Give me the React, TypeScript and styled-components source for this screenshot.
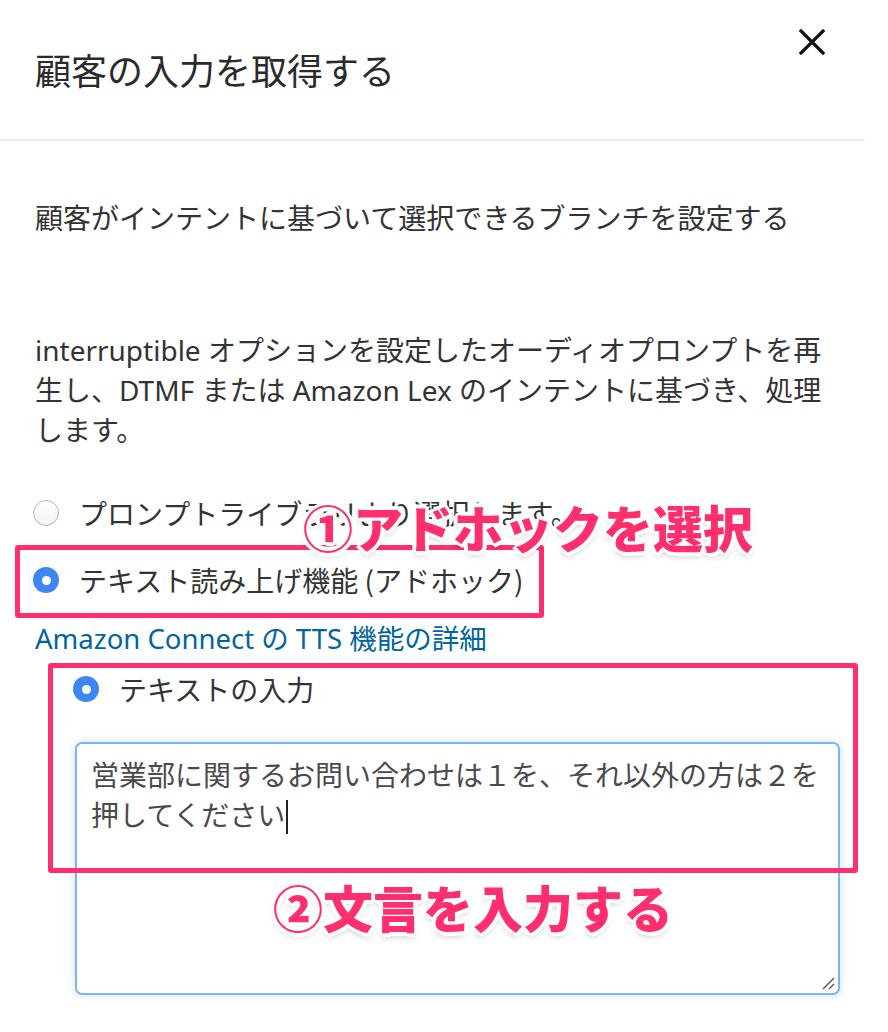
import React from "react";
import styled, { createGlobalStyle } from "styled-components";

const GlobalStyle = createGlobalStyle`
  body {
    margin: 0;
    background: #ffffff;
    font-family: "Noto Sans", "Noto Sans CJK JP", sans-serif;
    color: #333333;
  }
`;

const Page = styled.div`
  position: relative;
  width: 888px;
  height: 1032px;
  overflow: hidden;
  background: #ffffff;
`;

const Header = styled.div`
  width: 865px;
  height: 141px;
  border-bottom: 2px solid #eaeded;
  display: flex;
  justify-content: space-between;
  align-items: flex-start;
  box-sizing: border-box;
  padding: 0 39px 0 35px;
`;

const Title = styled.h1`
  margin: 46px 0 0;
  font-family: "Noto Sans CJK JP", sans-serif;
  font-size: 36px;
  line-height: 46px;
  font-weight: 400;
  color: #2a2a2a;
`;

const CloseButton = styled.button`
  margin-top: 28px;
  padding: 0;
  width: 28px;
  height: 28px;
  border: none;
  background: none;
  display: flex;
  align-items: center;
  justify-content: center;
`;

const Body = styled.div`
  padding: 57px 0 0 35px;
  width: 800px;
`;

const Text = styled.p<{ $gap?: number }>`
  margin: 0 0 ${(p) => p.$gap ?? 0}px;
  font-size: 28px;
  line-height: 40px;
  color: #333333;
`;

const Options = styled.div`
  display: flex;
  flex-direction: column;
`;

const RadioRow = styled.label<{ $indent?: number; $gap?: number }>`
  display: flex;
  align-items: center;
  gap: 20px;
  height: 40px;
  margin-left: ${(p) => p.$indent ?? -2}px;
  margin-bottom: ${(p) => p.$gap ?? 0}px;
  font-family: "Noto Sans CJK JP", sans-serif;
  font-size: 28px;
  color: #333333;
`;

const Radio = styled.span<{ $checked?: boolean }>`
  flex: none;
  width: 26px;
  height: 26px;
  border-radius: 50%;
  box-sizing: border-box;
  display: flex;
  align-items: center;
  justify-content: center;
  background: ${(p) => (p.$checked ? "#3e86f4" : "linear-gradient(#ffffff, #f4f4f4)")};
  border: ${(p) => (p.$checked ? "none" : "1px solid #b9b9b9")};
  box-shadow: ${(p) => (p.$checked ? "none" : "inset 0 -1px 1px rgba(0,0,0,0.06)")};

  &::after {
    content: "";
    display: ${(p) => (p.$checked ? "block" : "none")};
    width: 9px;
    height: 9px;
    border-radius: 50%;
    background: #ffffff;
  }
`;

const DocLink = styled.a`
  display: block;
  height: 40px;
  line-height: 40px;
  margin-bottom: 10px;
  font-size: 27.5px;
  color: #00659e;
  text-decoration: none;
`;

const TextBox = styled.div`
  position: relative;
  margin: 33px 0 0 40px;
  width: 765px;
  height: 253px;
  box-sizing: border-box;
  padding: 10px 14px;
  border: 2px solid #79b6ec;
  border-radius: 7px;
  box-shadow: 0 0 10px rgba(100, 170, 240, 0.35);
  font-family: "Noto Sans CJK JP", sans-serif;
  font-size: 28px;
  line-height: 40px;
  color: #4a4a4a;
  word-break: break-all;
`;

const Caret = styled.span`
  display: inline-block;
  width: 2px;
  height: 34px;
  margin-left: 1px;
  vertical-align: -8px;
  background: #222222;
`;

const Grip = styled.svg`
  position: absolute;
  right: 3px;
  bottom: 3px;
`;

const Highlight = styled.div<{ $l: number; $t: number; $w: number; $h: number }>`
  position: absolute;
  left: ${(p) => p.$l}px;
  top: ${(p) => p.$t}px;
  width: ${(p) => p.$w}px;
  height: ${(p) => p.$h}px;
  box-sizing: border-box;
  border: 5px solid #ff2e6d;
  border-radius: 3px;
  pointer-events: none;
`;

const Note = styled.div<{ $l: number; $t: number }>`
  position: absolute;
  left: ${(p) => p.$l}px;
  top: ${(p) => p.$t}px;
  font-family: "Noto Sans CJK JP", sans-serif;
  font-size: 50px;
  line-height: 60px;
  font-weight: 900;
  color: #ff2e6d;
  white-space: nowrap;
  text-shadow:
    3px 0 0 #fff, -3px 0 0 #fff, 0 3px 0 #fff, 0 -3px 0 #fff,
    2px 2px 0 #fff, -2px 2px 0 #fff, 2px -2px 0 #fff, -2px -2px 0 #fff,
    4px 1px 0 #fff, -4px 1px 0 #fff, 1px 4px 0 #fff, 1px -4px 0 #fff,
    0 4px 6px rgba(0, 0, 0, 0.25);
`;

export default function App() {
  return (
    <Page>
      <GlobalStyle />
      <Header>
        <Title>顧客の入力を取得する</Title>
        <CloseButton aria-label="close">
          <svg width="26" height="26" viewBox="0 0 26 26">
            <path d="M2 2 L24 24 M24 2 L2 24" stroke="#111" strokeWidth="3.2" strokeLinecap="square" />
          </svg>
        </CloseButton>
      </Header>

      <Body>
        <Text $gap={92}>顧客がインテントに基づいて選択できるブランチを設定する</Text>
        <Text $gap={43}>
          interruptible オプションを設定したオーディオプロンプトを再生し、DTMF または Amazon Lex のインテントに基づき、処理します。
        </Text>

        <Options>
          <RadioRow $gap={27}>
            <Radio />
            プロンプトライブラリより選択します。
          </RadioRow>
          <RadioRow $gap={19}>
            <Radio $checked />
            テキスト読み上げ機能 (アドホック)
          </RadioRow>
          <DocLink href="#">Amazon Connect の TTS 機能の詳細</DocLink>
          <RadioRow $indent={38}>
            <Radio $checked />
            テキストの入力
          </RadioRow>
        </Options>

        <TextBox>
          営業部に関するお問い合わせは１を、それ以外の方は２を押してください
          <Caret />
          <Grip width="14" height="14" viewBox="0 0 14 14">
            <path d="M2 13 L13 2 M8 13 L13 8" stroke="#555" strokeWidth="1.4" />
          </Grip>
        </TextBox>
      </Body>

      <Highlight $l={15} $t={545} $w={529} $h={73} />
      <Highlight $l={48} $t={663} $w={810} $h={210} />
      <Note $l={303} $t={496}>①アドホックを選択</Note>
      <Note $l={273} $t={876}>②文言を入力する</Note>
    </Page>
  );
}
